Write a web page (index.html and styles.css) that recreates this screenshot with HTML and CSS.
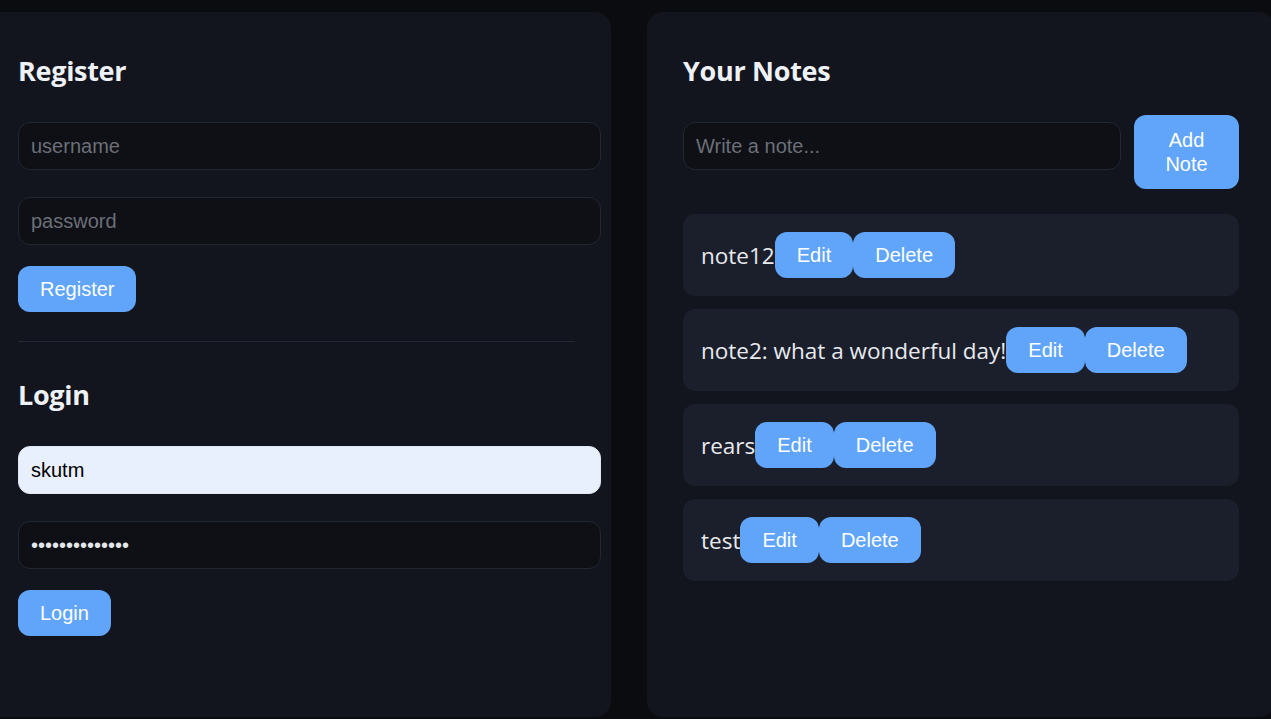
FILE: index.html
```html
<!DOCTYPE html>
<html lang="en">
<head>
<meta charset="utf-8">
<title>Notes</title>
<link rel="stylesheet" href="styles.css">
</head>
<body>
<div class="layout">
  <section class="card auth">
    <h2 class="title">Register</h2>
    <input class="field first" type="text" placeholder="username">
    <input class="field" type="password" placeholder="password">
    <button class="btn">Register</button>
    <hr class="divider">
    <h2 class="title after-divider">Login</h2>
    <input class="field first filled" type="text" value="skutm">
    <input class="field" type="password" value="abcdefghijklmn">
    <button class="btn">Login</button>
  </section>
  <section class="card notes">
    <h2 class="title">Your Notes</h2>
    <div class="add-row">
      <input class="field note-input" type="text" placeholder="Write a note...">
      <button class="btn add-btn">Add Note</button>
    </div>
    <ul class="note-list">
      <li class="note"><span class="note-text">note12</span><button class="btn">Edit</button><button class="btn">Delete</button></li>
      <li class="note"><span class="note-text">note2: what a wonderful day!</span><button class="btn">Edit</button><button class="btn">Delete</button></li>
      <li class="note"><span class="note-text">rears</span><button class="btn">Edit</button><button class="btn">Delete</button></li>
      <li class="note"><span class="note-text">test</span><button class="btn">Edit</button><button class="btn">Delete</button></li>
    </ul>
  </section>
</div>
</body>
</html>
```

FILE: styles.css
```css
html, body {
  margin: 0;
  padding: 0;
  overflow: hidden;
  background: #0b0c10;
  height: 100%;
}

body {
  font-family: "Open Sans", "Noto Sans", sans-serif;
  color: #e5e7eb;
}

.layout {
  display: grid;
  grid-template-columns: 629px 628px;
  column-gap: 36px;
  margin-left: -18px;
  padding-top: 12px;
}

.card {
  background: #12151d;
  border-radius: 16px;
  height: 705px;
  box-sizing: border-box;
  padding: 36px;
  display: flex;
  flex-direction: column;
  align-items: flex-start;
}

.title {
  margin: 7px 0 0;
  font-size: 27px;
  line-height: 32px;
  font-weight: 700;
  color: #eef2f7;
  letter-spacing: -0.3px;
}

.title.after-divider {
  margin-top: 37px;
}

.field {
  box-sizing: content-box;
  width: 100%;
  height: 46px;
  margin: 27px 0 0;
  padding: 0 12px;
  border: 1px solid #222734;
  border-radius: 12px;
  background: #0e1015;
  color: #e5e7eb;
  font-family: "Liberation Sans", Arial, sans-serif;
  font-size: 20px;
  outline: none;
}

.field.first {
  margin-top: 35px;
}

.field::placeholder {
  color: #6b6f78;
}

.field.filled {
  background: #e8f0fe;
  color: #000;
  border-color: #dfe6f2;
}

.btn {
  margin-top: 21px;
  padding: 12px 22px;
  border: none;
  border-radius: 12px;
  background: #60a5fa;
  color: #ffffff;
  font-family: "Liberation Sans", Arial, sans-serif;
  font-size: 20px;
  line-height: 22px;
  cursor: pointer;
}

.divider {
  align-self: stretch;
  margin: 29px 0 0;
  border: none;
  border-top: 1px solid #232838;
  height: 0;
}

.notes {
  align-items: stretch;
}

.notes .title {
  align-self: flex-start;
}

.add-row {
  display: flex;
  align-items: stretch;
  gap: 13px;
  margin-top: 28px;
}

.field.note-input {
  flex: 1 1 0;
  min-width: 0;
  width: auto;
  margin: 7px 0 19px;
}

.add-btn {
  margin: 0;
  width: 105px;
  flex: none;
  white-space: normal;
  line-height: 24px;
}

.note-list {
  list-style: none;
  margin: 25px 0 0;
  padding: 0;
  display: flex;
  flex-direction: column;
  gap: 13px;
}

.note {
  display: flex;
  align-items: center;
  padding: 18px;
  background: #1b1f2b;
  border-radius: 12px;
}

.note-text {
  font-size: 22.5px;
  color: #e8eaee;
}

.note .btn {
  margin: 0;
}
```
